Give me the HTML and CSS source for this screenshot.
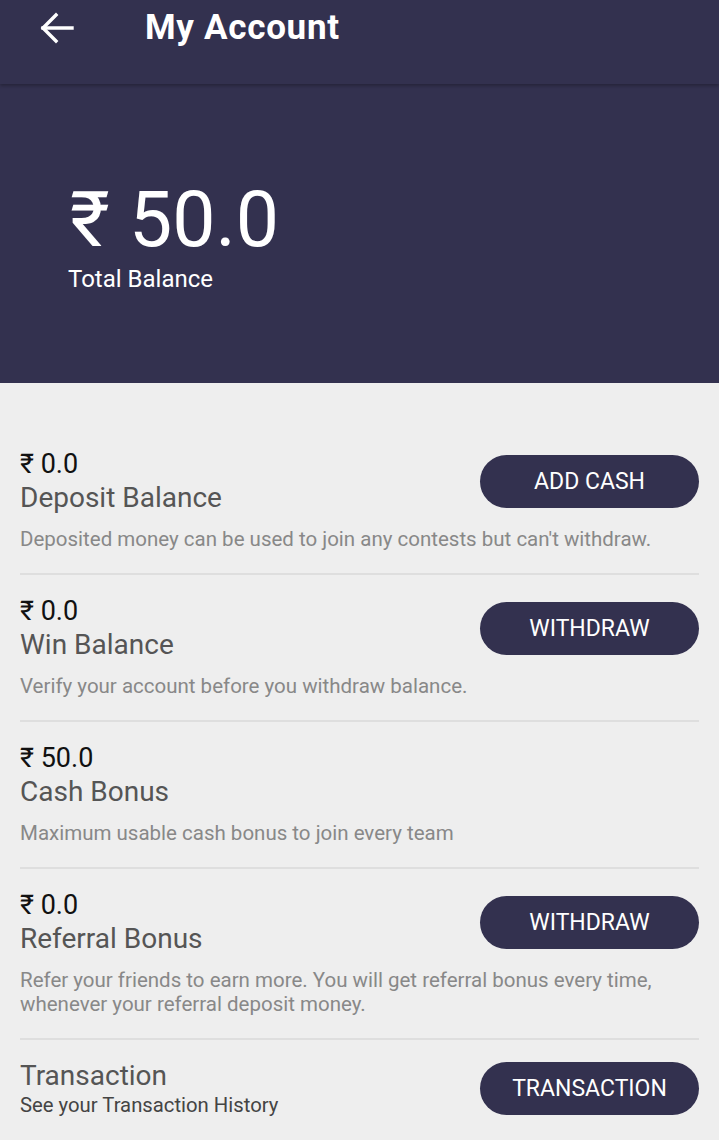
FILE: index.html
```html
<!DOCTYPE html>
<html>
<head>
<meta charset="utf-8">
<link rel="stylesheet" href="styles.css">
</head>
<body>
<div class="app">
  <header class="topbar">
    <svg class="back" width="34" height="32" viewBox="0 0 34 32" fill="none" stroke="#fff" stroke-width="3.4" stroke-linecap="square">
      <path d="M3 16 H32"/>
      <path d="M16 3 L3 16 L16 29" stroke-linejoin="miter"/>
    </svg>
    <h1 class="title">My Account</h1>
  </header>
  <section class="hero">
    <div class="total"><span class="rs">₹</span> 50.0</div>
    <div class="total-label">Total Balance</div>
  </section>
  <main class="list">
    <div class="item">
      <div class="item-top">
        <div class="item-text">
          <div class="amount">₹ 0.0</div>
          <div class="name">Deposit Balance</div>
        </div>
        <button class="btn">ADD CASH</button>
      </div>
      <p class="desc">Deposited money can be used to join any contests but can't withdraw.</p>
    </div>
    <div class="item">
      <div class="item-top">
        <div class="item-text">
          <div class="amount">₹ 0.0</div>
          <div class="name">Win Balance</div>
        </div>
        <button class="btn">WITHDRAW</button>
      </div>
      <p class="desc">Verify your account before you withdraw balance.</p>
    </div>
    <div class="item">
      <div class="item-top">
        <div class="item-text">
          <div class="amount">₹ 50.0</div>
          <div class="name">Cash Bonus</div>
        </div>
      </div>
      <p class="desc">Maximum usable cash bonus to join every team</p>
    </div>
    <div class="item">
      <div class="item-top">
        <div class="item-text">
          <div class="amount">₹ 0.0</div>
          <div class="name">Referral Bonus</div>
        </div>
        <button class="btn">WITHDRAW</button>
      </div>
      <p class="desc">Refer your friends to earn more. You will get referral bonus every time, whenever your referral deposit money.</p>
    </div>
    <div class="item last">
      <div class="item-top">
        <div class="item-text">
          <div class="name">Transaction</div>
          <div class="sub">See your Transaction History</div>
        </div>
        <button class="btn">TRANSACTION</button>
      </div>
    </div>
  </main>
</div>
</body>
</html>
```

FILE: styles.css
```css
* { box-sizing: border-box; }
html, body { margin: 0; padding: 0; }
body {
  background: #eeeeee;
  font-family: Roboto, "Noto Sans", sans-serif;
  width: 719px;
}
.app { width: 719px; }
.topbar {
  height: 84px;
  background: #33314f;
  display: flex;
  align-items: center;
  padding-left: 40px;
  box-shadow: 0 2px 3px rgba(0,0,0,0.25);
  position: relative;
  z-index: 1;
  padding-bottom: 28px;
}
.back { display: block; flex: none; }
.title {
  margin: 0 0 0 71px;
  color: #fff;
  font-size: 35px;
  font-weight: 700;
  letter-spacing: 0.7px;
  line-height: 40px;
}
.hero {
  background: #33314f;
  height: 299px;
  padding: 93px 0 0 68px;
  color: #fff;
}
.total {
  font-size: 77px;
  line-height: 86px;
  padding-left: 2px;
  font-weight: 400;
}
.total-label {
  font-size: 24px;
  line-height: 28px;
  margin-top: 2px;
}
.list { padding: 0 20px; }
.item {
  border-bottom: 2px solid #dedede;
  padding: 65px 0 22px;
}
.item + .item { padding-top: 20px; }
.item.last { border-bottom: none; padding-top: 19px; }
.item-top {
  display: flex;
  align-items: center;
  justify-content: space-between;
}
.amount {
  color: #111;
  font-size: 27px;
  line-height: 33px;
}
.name {
  color: #555;
  font-size: 28px;
  line-height: 34px;
}
.sub {
  color: #444;
  font-size: 20.3px;
  line-height: 24px;
}
.btn {
  width: 219px;
  height: 53px;
  border: none;
  border-radius: 27px;
  background: #33314f;
  color: #fff;
  font-family: inherit;
  font-size: 23px;
  padding: 0;
  flex: none;
}
.desc {
  margin: 12px 0 0;
  color: #888;
  font-size: 20.5px;
  line-height: 24px;
}
```
